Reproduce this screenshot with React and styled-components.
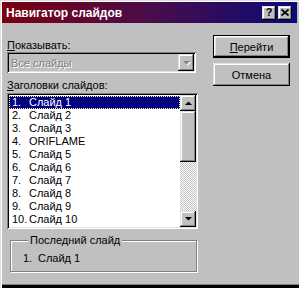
import React from "react";
import styled, { createGlobalStyle } from "styled-components";

const Global = createGlobalStyle`
  html, body { margin: 0; padding: 0; background: #c0c0c0; }
  body { font-family: "Liberation Sans", Arial, sans-serif; font-size: 11px; color: #000; }
`;

const raised = `
  box-shadow: inset -1px -1px 0 #000, inset 1px 1px 0 #dfdfdf,
    inset -2px -2px 0 #808080, inset 2px 2px 0 #fff;
`;

const sunken = `
  box-shadow: inset 1px 1px 0 #808080, inset -1px -1px 0 #fff,
    inset 2px 2px 0 #000, inset -2px -2px 0 #dfdfdf;
`;

const Window = styled.div`
  width: 299px;
  height: 288px;
  box-sizing: border-box;
  background: #c0c0c0;
  padding: 2px 2px 0 2px;
  display: flex;
  flex-direction: column;
  box-shadow: inset 1px 1px 0 #dfdfdf, inset 2px 2px 0 #fff,
    inset 0 -3px 0 #000, inset 0 -4px 0 #808080;
`;

const TitleBar = styled.div`
  height: 21px;
  display: flex;
  align-items: center;
  padding: 0 5px 0 4px;
  background: linear-gradient(90deg, #7a0010 0%, #4a0d4a 50%, #0a0a78 100%);
  color: #fff;
`;

const Title = styled.div`
  flex: 1;
  font-weight: bold;
  font-size: 12px;
`;

const CapButton = styled.div`
  width: 14px;
  height: 14px;
  margin-left: ${(p) => (p.$gap ? "2px" : "0")};
  background: #c0c0c0;
  ${raised}
  display: flex;
  align-items: center;
  justify-content: center;
  color: #000;
  font-weight: bold;
  font-size: 11px;
  line-height: 1;
`;

const Body = styled.div`
  display: flex;
  padding: 0 7px 0 5px;
`;

const LeftCol = styled.div`
  width: 191px;
  display: flex;
  flex-direction: column;
`;

const RightCol = styled.div`
  width: 77px;
  margin-left: 15px;
  padding-top: 12px;
  display: flex;
  flex-direction: column;
  gap: 5px;
`;

const Label = styled.div`
  line-height: 13px;
  margin-top: ${(p) => p.$top}px;
  u { text-decoration: underline; }
`;

const Combo = styled.div`
  height: 21px;
  width: 189px;
  box-sizing: border-box;
  padding: 2px;
  display: flex;
  align-items: center;
  ${sunken}
`;

const ComboText = styled.div`
  flex: 1;
  padding-left: 2px;
  color: #808080;
  text-shadow: 1px 1px 0 #fff;
`;

const ArrowButton = styled.div`
  width: 16px;
  height: ${(p) => p.$h || 16}px;
  flex-shrink: 0;
  background: #c0c0c0;
  ${raised}
  display: flex;
  align-items: center;
  justify-content: center;
`;

const ListBox = styled.div`
  margin-top: 1px;
  height: 136px;
  box-sizing: border-box;
  padding: 2px;
  display: flex;
  background: #fff;
  ${sunken}
`;

const Items = styled.div`
  flex: 1;
  padding-top: 1px;
`;

const Item = styled.div`
  height: 13px;
  line-height: 13px;
  padding-left: 3px;
  display: flex;
  background: ${(p) => (p.$sel ? "#000080" : "transparent")};
  color: ${(p) => (p.$sel ? "#fff" : "#000")};
  outline: ${(p) => (p.$sel ? "1px dotted #ffffa0" : "none")};
  outline-offset: -1px;
`;

const Num = styled.span`
  width: ${(p) => p.$w}px;
  flex-shrink: 0;
`;

const ScrollBar = styled.div`
  width: 16px;
  display: flex;
  flex-direction: column;
`;

const Thumb = styled.div`
  height: 51px;
  background: #c0c0c0;
  ${raised}
`;

const Track = styled.div`
  flex: 1;
  background-color: #c0c0c0;
  background-image: repeating-conic-gradient(#fff 0 25%, #c0c0c0 0 50%);
  background-size: 2px 2px;
`;

const Group = styled.fieldset`
  margin: 5px 1px 0 3px;
  padding: 5px 0 6px 12px;
  border: 1px solid #808080;
  box-shadow: inset 1px 1px 0 #fff, 1px 1px 0 #fff;
  display: flex;
`;

const Legend = styled.legend`
  margin-left: 5px;
  padding: 0 2px;
  background: #c0c0c0;
  line-height: 13px;
`;

const GroupItem = styled.div`
  display: flex;
  line-height: 13px;
`;

const Button = styled.div`
  height: 23px;
  box-sizing: border-box;
  display: flex;
  align-items: center;
  justify-content: center;
  background: #c0c0c0;
  ${(p) =>
    p.$default
      ? `border: 1px solid #000;
         box-shadow: inset -1px -1px 0 #000, inset 1px 1px 0 #fff,
           inset -2px -2px 0 #808080, inset 2px 2px 0 #dfdfdf;`
      : raised}
`;

const Tri = ({ up, gray }) => (
  <svg width="7" height="4" viewBox="0 0 7 4" style={{ overflow: "visible" }}>
    {gray && <polygon points={up ? "1,4 8,4 4.5,0.5" : "1,1 8,1 4.5,4.5"} fill="#fff" />}
    <polygon points={up ? "0,4 7,4 3.5,0.5" : "0,0 7,0 3.5,3.5"} fill={gray ? "#808080" : "#000"} />
  </svg>
);

const CloseIcon = () => (
  <svg width="8" height="7" viewBox="0 0 8 7">
    <path d="M0.5 0.5 L7.5 6.5 M7.5 0.5 L0.5 6.5" stroke="#000" strokeWidth="1.8" />
  </svg>
);

const slides = [
  ["1.", "Слайд 1"],
  ["2.", "Слайд 2"],
  ["3.", "Слайд 3"],
  ["4.", "ORIFLAME"],
  ["5.", "Слайд 5"],
  ["6.", "Слайд 6"],
  ["7.", "Слайд 7"],
  ["8.", "Слайд 8"],
  ["9.", "Слайд 9"],
  ["10.", "Слайд 10"],
];

export default function App() {
  return (
    <>
      <Global />
      <Window>
        <TitleBar>
          <Title>Навигатор слайдов</Title>
          <CapButton>?</CapButton>
          <CapButton $gap>
            <CloseIcon />
          </CapButton>
        </TitleBar>
        <Body>
          <LeftCol>
            <Label $top={16}>
              <u>П</u>оказывать:
            </Label>
            <Combo>
              <ComboText>Все слайды</ComboText>
              <ArrowButton $h={17}>
                <Tri gray />
              </ArrowButton>
            </Combo>
            <Label $top={6}>
              <u>З</u>аголовки слайдов:
            </Label>
            <ListBox>
              <Items>
                {slides.map(([n, t], i) => (
                  <Item key={n} $sel={i === 0}>
                    <Num $w={17}>{n}</Num>
                    {t}
                  </Item>
                ))}
              </Items>
              <ScrollBar>
                <ArrowButton>
                  <Tri up />
                </ArrowButton>
                <Thumb />
                <Track />
                <ArrowButton>
                  <Tri />
                </ArrowButton>
              </ScrollBar>
            </ListBox>
            <Group>
              <Legend>Последний слайд</Legend>
              <GroupItem>
                <Num $w={15}>1.</Num>
                Слайд 1
              </GroupItem>
            </Group>
          </LeftCol>
          <RightCol>
            <Button $default>
              <span>
                <u>П</u>ерейти
              </span>
            </Button>
            <Button>Отмена</Button>
          </RightCol>
        </Body>
      </Window>
    </>
  );
}
